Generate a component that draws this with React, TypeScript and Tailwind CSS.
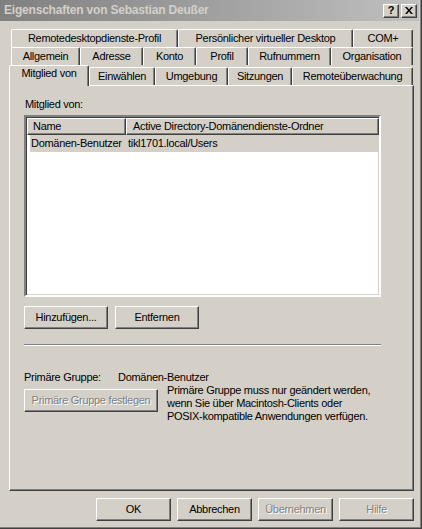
import type { ReactNode } from "react";

const raised =
  "border border-t-white border-l-white border-r-[#404040] border-b-[#404040] shadow-[inset_-1px_-1px_#808080]";

type TabProps = {
  label: string;
  width: string;
  active?: boolean;
};

function Tab({ label, width, active }: TabProps) {
  if (active) {
    return (
      <div
        className={`${width} relative z-10 -mb-px flex h-[21px] items-start justify-center rounded-t-[2px] border-l border-t border-r border-l-white border-t-white border-r-[#404040] bg-[#d4d0c8] pt-[1px] shadow-[inset_-1px_0_#808080]`}
      >
        {label}
      </div>
    );
  }
  return (
    <div
      className={`${width} flex h-[18px] items-center justify-center rounded-t-[2px] border-l border-t border-r border-l-white border-t-white border-r-[#404040] shadow-[inset_-1px_0_#808080]`}
    >
      {label}
    </div>
  );
}

function Button({
  children,
  width,
  disabled,
}: {
  children: ReactNode;
  width: string;
  disabled?: boolean;
}) {
  return (
    <div
      className={`${width} ${raised} flex h-[23px] items-center justify-center ${
        disabled ? "text-[#808080] [text-shadow:1px_1px_0_#fff]" : ""
      }`}
    >
      {children}
    </div>
  );
}

export default function App() {
  return (
    <div className="relative h-[529px] w-[422px] overflow-hidden border-r border-b border-r-[#404040] border-b-[#404040] bg-[#d4d0c8] font-['Liberation_Sans',Arial,sans-serif] text-[11px] leading-[13px] tracking-[-0.3px] text-black shadow-[inset_-1px_-1px_#808080]">
      {/* title bar */}
      <div className="mr-[2px] flex h-[21px] items-center bg-gradient-to-r from-[#808080] to-[#c0c0c0] pl-[4px] pr-[2px]">
        <span className="flex-1 text-[12px] font-bold tracking-[-0.2px] text-[#d4d0c8]">
          Eigenschaften von Sebastian Deußer
        </span>
        <div className="flex gap-[2px]">
          <div
            className={`${raised} flex h-[14px] w-[16px] items-center justify-center bg-[#d4d0c8] text-[11px] font-bold leading-none`}
          >
            ?
          </div>
          <div
            className={`${raised} flex h-[14px] w-[16px] items-center justify-center bg-[#d4d0c8]`}
          >
            <svg width="8" height="7" viewBox="0 0 8 7">
              <path d="M0 0h2l2 2.5L6 0h2L5 3.5 8 7H6L4 4.5 2 7H0l3-3.5z" fill="#000" />
            </svg>
          </div>
        </div>
      </div>

      <div className="pl-[9px] pt-[8px]">
        {/* tab rows */}
        <div className="flex pl-[2px]">
          <Tab label="Remotedesktopdienste-Profil" width="w-[167px]" />
          <Tab label="Persönlicher virtueller Desktop" width="w-[175px]" />
          <Tab label="COM+" width="w-[60px]" />
        </div>
        <div className="flex pl-[2px]">
          <Tab label="Allgemein" width="w-[69px]" />
          <Tab label="Adresse" width="w-[63px]" />
          <Tab label="Konto" width="w-[53px]" />
          <Tab label="Profil" width="w-[52px]" />
          <Tab label="Rufnummern" width="w-[83px]" />
          <Tab label="Organisation" width="w-[82px]" />
        </div>
        <div className="flex h-[20px] items-end">
          <Tab label="Mitglied von" width="w-[80px]" active />
          <Tab label="Einwählen" width="w-[66px]" />
          <Tab label="Umgebung" width="w-[73px]" />
          <Tab label="Sitzungen" width="w-[64px]" />
          <Tab label="Remoteüberwachung" width="w-[121px]" />
        </div>

        {/* panel */}
        <div className="h-[406px] w-[405px] border border-t-white border-l-white border-r-[#404040] border-b-[#404040] shadow-[inset_-1px_-1px_#808080]">
          <div className="ml-[15px] mt-[12px]">Mitglied von:</div>

          <div className="ml-[14px] mt-[4px] h-[182px] w-[357px] border-2 border-t-[#808080] border-l-[#808080] border-r-white border-b-white bg-white shadow-[inset_1px_1px_#404040,inset_-1px_-1px_#d4d0c8]">
            <div className="ml-px mt-px flex h-[17px]">
              <div className={`${raised} flex w-[99px] items-center bg-[#d4d0c8] pl-[5px]`}>
                Name
              </div>
              <div className={`${raised} flex w-[253px] items-center bg-[#d4d0c8] pl-[6px]`}>
                Active Directory-Domänendienste-Ordner
              </div>
            </div>
            <div className="ml-[4px] flex h-[17px] w-[348px] items-center bg-[#d4d0c8]">
              <span className="w-[98px] pl-[1px]">Domänen-Benutzer</span>
              <span>tikl1701.local/Users</span>
            </div>
          </div>

          <div className="ml-[14px] mt-[9px] flex gap-[7px]">
            <Button width="w-[84px]">Hinzufügen...</Button>
            <Button width="w-[84px]">Entfernen</Button>
          </div>

          <div className="ml-[14px] mt-[15px] h-[2px] w-[357px] border-t border-b border-t-[#808080] border-b-white" />

          <div className="ml-[14px] mt-[25px] flex">
            <span className="w-[94px]">Primäre Gruppe:</span>
            <span>Domänen-Benutzer</span>
          </div>
          <div className="ml-[14px] flex items-start gap-[9px]">
            <div className="mt-[5px]">
              <Button width="w-[134px]" disabled>
                Primäre Gruppe festlegen
              </Button>
            </div>
            <p>
              Primäre Gruppe muss nur geändert werden,
              <br />
              wenn Sie über Macintosh-Clients oder
              <br />
              POSIX-kompatible Anwendungen verfügen.
            </p>
          </div>
        </div>
      </div>

      {/* dialog buttons */}
      <div className="mt-[7px] flex justify-end gap-[6px] pr-[7px]">
        <Button width="w-[75px]">OK</Button>
        <Button width="w-[75px]">Abbrechen</Button>
        <Button width="w-[75px]" disabled>
          Übernehmen
        </Button>
        <Button width="w-[75px]" disabled>
          Hilfe
        </Button>
      </div>
    </div>
  );
}
